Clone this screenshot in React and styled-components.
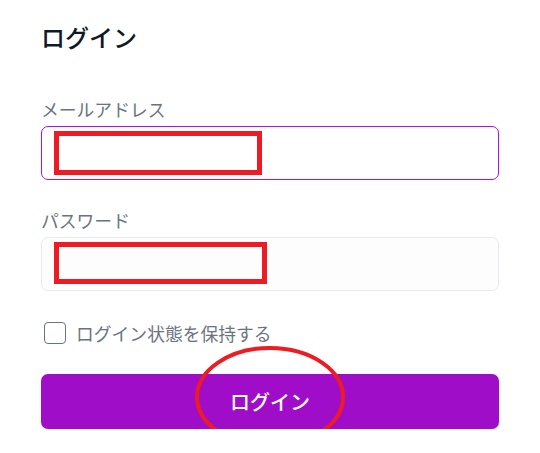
import React from "react";
import styled, { createGlobalStyle } from "styled-components";

const Global = createGlobalStyle`
  body {
    margin: 0;
    background: #ffffff;
    font-family: "Noto Sans CJK JP", "Noto Sans", sans-serif;
  }
`;

const Page = styled.div`
  padding: 19px 41px 0 41px;
  width: 458px;
`;

const Title = styled.h1`
  margin: 0 0 41px 0;
  font-size: 24px;
  line-height: 36px;
  font-weight: 500;
  color: #111827;
`;

const Field = styled.div`
  display: flex;
  flex-direction: column;
  gap: 3px;
  margin-bottom: ${({ last }) => (last ? "30px" : "27px")};
`;

const Label = styled.label`
  font-size: 17.8px;
  line-height: 27px;
  color: #6b7280;
`;

const InputBox = styled.div`
  position: relative;
  box-sizing: border-box;
  height: 54px;
  border-radius: 7px;
  border: 1px solid ${({ focused }) => (focused ? "#b10de6" : "#e9e9ec")};
  background: ${({ focused }) => (focused ? "#ffffff" : "#fdfdfd")};
`;

const Redact = styled.div`
  position: absolute;
  left: 12px;
  top: 4px;
  width: ${({ w }) => w}px;
  height: ${({ h }) => h}px;
  box-sizing: border-box;
  border: 5px solid #ed1c24;
`;

const CheckRow = styled.label`
  display: flex;
  align-items: center;
  gap: 10px;
  padding-left: 3px;
  margin-bottom: 29px;
  font-size: 17.8px;
  line-height: 24px;
  color: #6b7280;
`;

const Box = styled.span`
  box-sizing: border-box;
  width: 22px;
  height: 22px;
  border: 1.5px solid #6b7280;
  border-radius: 4px;
  background: #fff;
`;

const Button = styled.button`
  position: relative;
  width: 100%;
  height: 55px;
  border: none;
  border-radius: 7px;
  background: #a00dc8;
  color: #ffffff;
  font-family: inherit;
  font-size: 20px;
  font-weight: 500;
  box-shadow: 0 2px 6px rgba(0, 0, 0, 0.05);
`;

const Circle = styled.svg`
  position: absolute;
  left: 153px;
  top: -27px;
  overflow: visible;
  pointer-events: none;
`;

export default function App() {
  return (
    <>
      <Global />
      <Page>
        <Title>ログイン</Title>
        <Field>
          <Label>メールアドレス</Label>
          <InputBox focused>
            <Redact w={208} h={44} />
          </InputBox>
        </Field>
        <Field last>
          <Label>パスワード</Label>
          <InputBox>
            <Redact w={213} h={42} />
          </InputBox>
        </Field>
        <CheckRow>
          <Box />
          ログイン状態を保持する
        </CheckRow>
        <Button>
          ログイン
          <Circle width="152" height="100">
            <ellipse cx="76" cy="50" rx="73" ry="49" fill="none" stroke="#ed1c24" strokeWidth="4" />
          </Circle>
        </Button>
      </Page>
    </>
  );
}
